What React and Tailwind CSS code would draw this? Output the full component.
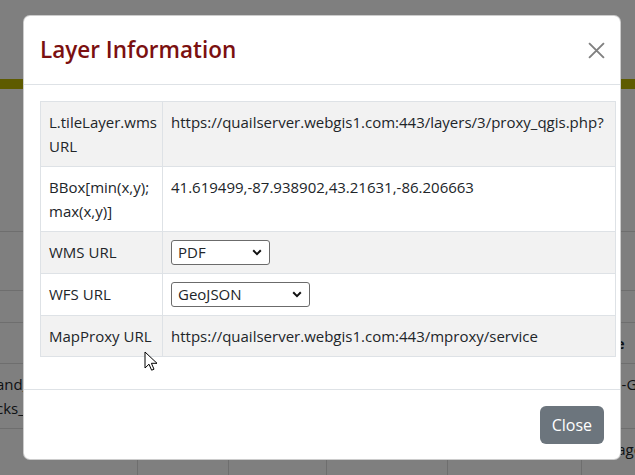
import React from "react";

const rows = [
  {
    label: ["L.tileLayer.wms", "URL"],
    value: "https://quailserver.webgis1.com:443/layers/3/proxy_qgis.php?",
  },
  {
    label: ["BBox[min(x,y);", "max(x,y)]"],
    value: "41.619499,-87.938902,43.21631,-86.206663",
  },
  { label: ["WMS URL"], select: { value: "PDF", width: "w-[99px]" } },
  { label: ["WFS URL"], select: { value: "GeoJSON", width: "w-[139px]" } },
  {
    label: ["MapProxy URL"],
    value: "https://quailserver.webgis1.com:443/mproxy/service",
  },
];

const Chevron = () => (
  <svg width="10" height="7" viewBox="0 0 10 7" fill="none">
    <path d="M1.2 1.3 5 5.1l3.8-3.8" stroke="#111" strokeWidth="2" />
  </svg>
);

const FakeSelect = ({ value, width }) => (
  <div
    className={`flex h-[25px] ${width} items-center justify-between rounded-[3px] border border-[#6b6b6b] bg-white pl-[6px] pr-[7px] leading-none`}
  >
    <span>{value}</span>
    <Chevron />
  </div>
);

// page that sits behind the modal backdrop
const BackgroundPage = () => {
  const cols = [
    "w-[137px] shrink-0",
    "w-[91px] shrink-0",
    "w-[98px] shrink-0",
    "w-[121px] shrink-0",
    "w-[134px] shrink-0",
    "min-w-0 flex-1 overflow-hidden",
  ];
  return (
    <div className="flex h-full flex-col">
      <div className="h-[79px]" />
      <div className="h-[10px] bg-[#bdb700]" />
      <div className="h-[142px]" />
      <div className="h-[59px] border-t border-[#dcdcdc]" />
      <div className="h-[32px] border-t border-[#dcdcdc]" />
      <div className="flex h-[41px] border-t border-[#dcdcdc] font-bold">
        {cols.map((c, i) => (
          <div key={i} className={`${c} whitespace-nowrap px-2 pt-2 leading-6`}>
            {i === 5 ? "Type" : ""}
          </div>
        ))}
      </div>
      <div className="flex h-[65px] border-t border-[#dcdcdc]">
        {cols.map((c, i) => (
          <div key={i} className={`${c} whitespace-nowrap px-2 pt-2 leading-6`}>
            {i === 0 && (
              <div className="-ml-[12px]">
                and_Trails
                <br />
                cks_Roads
              </div>
            )}
            {i === 5 && <div className="-ml-[3px]">WMS-GetMap</div>}
          </div>
        ))}
      </div>
      <div className="flex flex-1 border-t border-[#dcdcdc]">
        {cols.map((c, i) => (
          <div
            key={i}
            className={`${c} whitespace-nowrap px-2 pt-2 leading-6 ${i > 0 ? "border-l border-[#dcdcdc]" : ""}`}
          >
            {i === 5 && "Vintage"}
          </div>
        ))}
      </div>
    </div>
  );
};

export default function App() {
  return (
    <div className="relative h-[475px] w-[635px] overflow-hidden bg-white font-['Open_Sans',sans-serif] text-[15px] text-[#212529]">
      <BackgroundPage />

      {/* Modal backdrop + dialog */}
      <div className="absolute inset-0 bg-black/50">
        <div className="ml-[23px] mt-[15px] w-[598px] rounded-[7px] border border-black/20 bg-white">
          {/* Header */}
          <div className="flex h-[69px] items-center justify-between border-b border-[#dee2e6] pl-[16px] pr-[15px]">
            <h5 className="text-[22.5px] font-semibold leading-9 text-[#7b1010]">
              Layer Information
            </h5>
            <svg width="17" height="17" viewBox="0 0 16 16" fill="none" className="mt-[1px]">
              <path d="M1 1l14 14M15 1 1 15" stroke="#808080" strokeWidth="1.8" />
            </svg>
          </div>

          {/* Body */}
          <div className="p-4 pb-8">
            <table className="w-[576px] table-fixed border-collapse">
              <tbody>
                {rows.map((r, i) => (
                  <tr key={i} className={i % 2 === 0 ? "bg-[#f2f2f2]" : "bg-white"}>
                    <td className="w-[122px] whitespace-nowrap border border-[#dee2e6] p-2 align-top leading-6">
                      {r.label.map((l, j) => (
                        <div key={j}>{l}</div>
                      ))}
                    </td>
                    <td className="whitespace-nowrap border border-[#dee2e6] p-2 align-top leading-6">
                      {r.select ? <FakeSelect {...r.select} /> : r.value}
                    </td>
                  </tr>
                ))}
              </tbody>
            </table>
          </div>

          {/* Footer */}
          <div className="flex justify-end border-t border-[#dee2e6] px-4 pb-[15px] pt-4">
            <button className="h-[38px] rounded-[6px] bg-[#6c757d] px-3 text-[16px] leading-6 text-white">
              Close
            </button>
          </div>
        </div>
      </div>

      {/* mouse pointer */}
      <svg
        className="absolute left-[144px] top-[351px]"
        width="14"
        height="21"
        viewBox="0 0 14 21"
      >
        <path
          d="M1 1v16l4-3.8 2.6 6 2.4-1-2.6-5.9H13z"
          fill="#fff"
          stroke="#000"
          strokeWidth="1"
          strokeLinejoin="round"
        />
      </svg>
    </div>
  );
}
